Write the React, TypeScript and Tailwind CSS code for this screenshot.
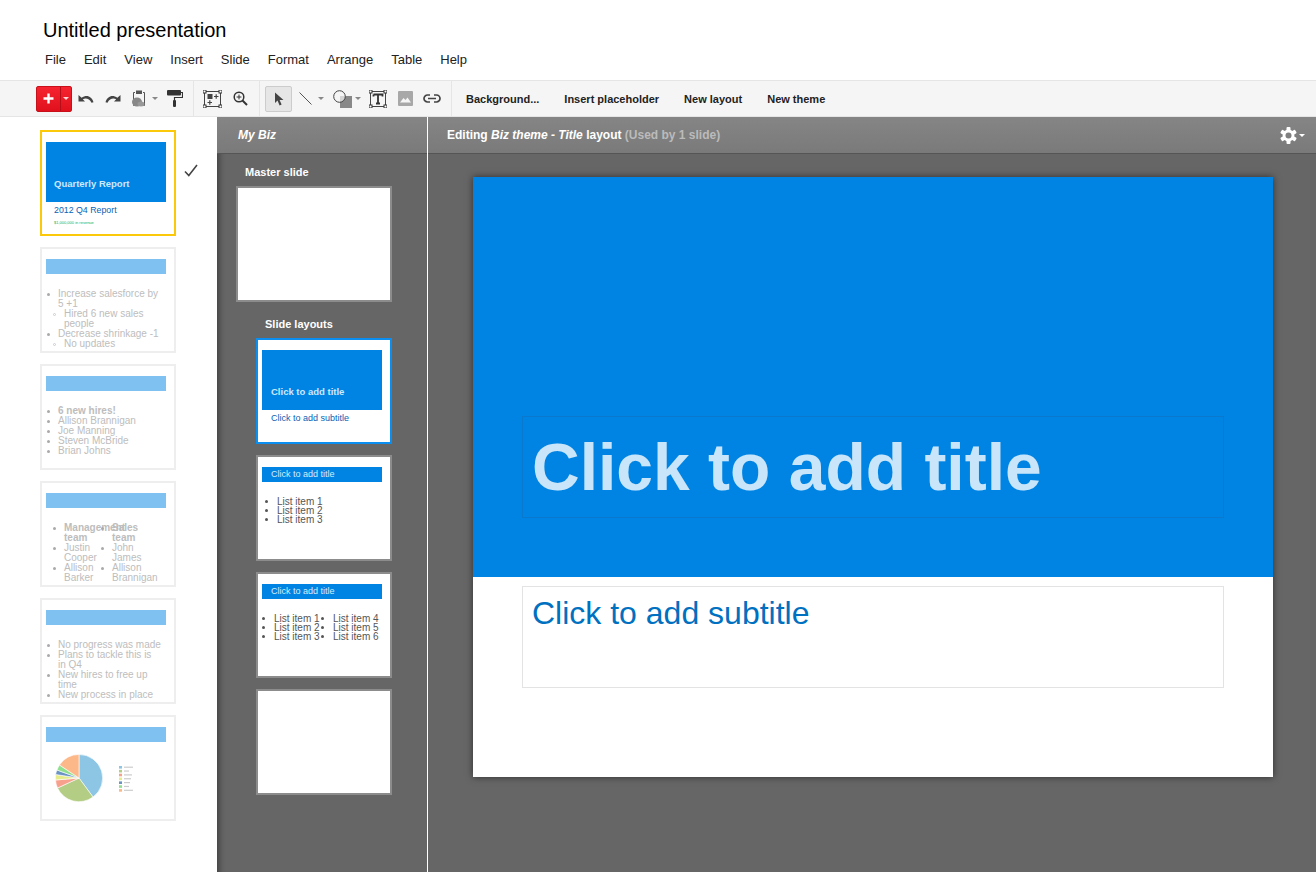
const menus = ["File", "Edit", "View", "Insert", "Slide", "Format", "Arrange", "Table", "Help"];
const toolButtons = ["Background...", "Insert placeholder", "New layout", "New theme"];

type Item = { text: string; level?: number; bold?: boolean };

const slide2: Item[] = [
  { text: "Increase salesforce by\n5 +1" },
  { text: "Hired 6 new sales\npeople", level: 1 },
  { text: "Decrease shrinkage -1" },
  { text: "No updates", level: 1 },
];
const slide3: Item[] = [
  { text: "6 new hires!", bold: true },
  { text: "Allison Brannigan" },
  { text: "Joe Manning" },
  { text: "Steven McBride" },
  { text: "Brian Johns" },
];
const slide5: Item[] = [
  { text: "No progress was made" },
  { text: "Plans to tackle this is\nin Q4" },
  { text: "New hires to free up\ntime" },
  { text: "New process in place" },
];

const Caret = ({ className = "" }: { className?: string }) => (
  <div className={`h-0 w-0 border-x-[3px] border-t-[3px] border-x-transparent border-t-[#888] ${className}`}></div>
);

const Handle = ({ x, y }: { x: number; y: number }) => (
  <rect x={x - 1.5} y={y - 1.5} width="3" height="3" fill="#fff" stroke="#333" />
);

const BulletList = ({ items }: { items: Item[] }) => (
  <div className="text-[10px] leading-[10px] text-[#bdbdbd]">
    {items.map((item, i) => (
      <div key={i} className={`flex ${item.level ? "ml-[6px]" : ""}`}>
        <span className={`mr-[8px] mt-[4px] h-[3px] w-[3px] shrink-0 rounded-full ${item.level ? "border border-[#ccc]" : "bg-[#aaa]"}`}></span>
        <span className={`whitespace-pre ${item.bold ? "font-bold" : ""}`}>{item.text}</span>
      </div>
    ))}
  </div>
);

const Thumb = ({ children, border = "border-[#eee]" }: { children?: React.ReactNode; border?: string }) => (
  <div className={`h-[106px] w-[136px] shrink-0 overflow-hidden border-2 bg-white px-[4px] pt-[10px] ${border}`}>{children}</div>
);

const TextThumb = ({ items }: { items: Item[] }) => (
  <Thumb>
    <div className="h-[15px] w-[120px] bg-[#7fc1f1]"></div>
    <div className="ml-[1px] mt-[15px]">
      <BulletList items={items} />
    </div>
  </Thumb>
);

const TwoColThumb = () => (
  <Thumb>
    <div className="h-[15px] w-[120px] bg-[#7fc1f1]"></div>
    <div className="ml-[7px] mt-[15px] flex">
      <div className="w-[48px]">
        <BulletList
          items={[
            { text: "Management\nteam", bold: true },
            { text: "Justin\nCooper" },
            { text: "Allison\nBarker" },
          ]}
        />
      </div>
      <div className="w-[48px]">
        <BulletList
          items={[
            { text: "Sales\nteam", bold: true },
            { text: "John\nJames" },
            { text: "Allison\nBrannigan" },
          ]}
        />
      </div>
    </div>
  </Thumb>
);

const ChartThumb = () => (
  <Thumb>
    <div className="h-[15px] w-[120px] bg-[#7fc1f1]"></div>
    <svg width="120" height="70" viewBox="0 0 120 70" className="block">
      <g transform="translate(33 36)" stroke="#fff" strokeWidth="0.6">
        <path d="M0 0 L0 -23.5 A23.5 23.5 0 0 1 14 19 Z" fill="#8cc6e4" />
        <path d="M0 0 L14 19 A23.5 23.5 0 0 1 -21.5 10 Z" fill="#b3cd85" />
        <path d="M0 0 L-21.5 10 A23.5 23.5 0 0 1 -23.5 2 Z" fill="#f7a08c" />
        <path d="M0 0 L-23.5 2 A23.5 23.5 0 0 1 -23.4 -3.5 Z" fill="#e6ec8c" />
        <path d="M0 0 L-23.4 -3.5 A23.5 23.5 0 0 1 -22 -8 Z" fill="#6b93c4" />
        <path d="M0 0 L-22 -8 A23.5 23.5 0 0 1 -19.5 -13 Z" fill="#8fe08f" />
        <path d="M0 0 L-19.5 -13 A23.5 23.5 0 0 1 0 -23.5 Z" fill="#fdb88a" />
      </g>
      {["#8cc6e4", "#b3cd85", "#f7a08c", "#e6ec8c", "#6b93c4", "#8fe08f", "#fdb88a"].map((c, i) => (
        <g key={c}>
          <rect x="73" y={24 + i * 3.85} width="3" height="2.6" fill={c} />
          <rect x="78" y={24.6 + i * 3.85} width={[9, 5, 8, 7, 6, 5, 9][i]} height="1.2" fill="#ccc" />
        </g>
      ))}
    </svg>
  </Thumb>
);

const LayoutTitle = () => (
  <div className="h-[15px] w-[120px] bg-[#0084e4] pl-[9px] text-[9px] leading-[15px] text-[#d6ecfb]">Click to add title</div>
);

const LayoutList = ({ items }: { items: string[] }) => (
  <div className="text-[10px] leading-[9px] text-[#555]">
    {items.map((t) => (
      <div key={t} className="flex">
        <span className="mt-[3px] h-[3px] w-[3px] shrink-0 rounded-full bg-[#555]"></span>
        <span className="ml-[9px] whitespace-nowrap">{t}</span>
      </div>
    ))}
  </div>
);

export default function App() {
  return (
    <div className="flex h-[872px] w-[1316px] flex-col overflow-hidden bg-white font-['Liberation_Sans',Arial,sans-serif] text-black">
      <div className="h-[80px] shrink-0 pl-[43px] pt-[17px]">
        <div className="text-[20px] leading-[26px]">Untitled presentation</div>
        <div className="ml-[2px] mt-[9px] flex gap-[18px] text-[13px] leading-[16px] text-[#222]">
          {menus.map((m) => (
            <span key={m}>{m}</span>
          ))}
        </div>
      </div>

      <div className="flex h-[37px] shrink-0 items-center border-y border-[#e5e5e5] bg-[#f5f5f5]">
        <div className="ml-[36px] flex h-[26px] w-[36px] overflow-hidden rounded-[2px] border border-[#c8101a] bg-gradient-to-b from-[#f5232f] to-[#e0101c] text-white">
          <div className="flex w-[24px] items-center justify-center border-r border-[#b50e18]">
            <svg width="11" height="11" viewBox="0 0 11 11">
              <path d="M5.5 0.5v10M0.5 5.5h10" stroke="#fff" strokeWidth="2.4" />
            </svg>
          </div>
          <div className="flex flex-1 items-center justify-center">
            <div className="h-0 w-0 border-x-[3px] border-t-[3px] border-x-transparent border-t-[#ffd5d5]"></div>
          </div>
        </div>

        <svg width="16" height="10" viewBox="0 0 16 10" className="ml-[6px]">
          <path d="M0.5 1 L0.5 7.5 L7 7.5 L4.8 5.2 C8 3.8 11.5 4.8 13.5 8.8 L15.5 8.2 C13.8 2.2 8.5 0 3.6 3.8 Z" fill="#444" />
        </svg>
        <svg width="16" height="10" viewBox="0 0 16 10" className="ml-[11px]">
          <path d="M15.5 1 L15.5 7.5 L9 7.5 L11.2 5.2 C8 3.8 4.5 4.8 2.5 8.8 L0.5 8.2 C2.2 2.2 7.5 0 12.4 3.8 Z" fill="#444" />
        </svg>

        <svg width="14" height="17" viewBox="0 0 14 17" className="ml-[11px]">
          <path d="M3 2.5H1.5v13h11v-13H11" fill="none" stroke="#555" strokeWidth="1" />
          <rect x="4" y="0.5" width="6" height="3.5" fill="#555" />
          <ellipse cx="5" cy="12" rx="5" ry="4.5" fill="#888" />
          <ellipse cx="9" cy="14" rx="3.5" ry="2.5" fill="#999" />
        </svg>
        <Caret className="ml-[6px]" />

        <svg width="16" height="17" viewBox="0 0 16 17" className="ml-[9px]">
          <rect x="0" y="0" width="14" height="5.5" rx="1" fill="#333" />
          <path d="M14 2.5h1.5v5H7.5v3" fill="none" stroke="#333" strokeWidth="1.2" />
          <rect x="6" y="10" width="3" height="7" rx="1" fill="#333" />
        </svg>

        <div className="ml-[10px] h-[36px] w-px bg-[#e5e5e5]"></div>

        <svg width="19" height="18" viewBox="0 0 19 18" className="ml-[9px]">
          <rect x="1.5" y="1.5" width="16" height="15" fill="none" stroke="#444" />
          <Handle x={1.5} y={1.5} />
          <Handle x={17.5} y={1.5} />
          <Handle x={1.5} y={16.5} />
          <Handle x={17.5} y={16.5} />
          <rect x="4.5" y="4" width="5" height="5" fill="#444" />
          <path d="M11 6.5h4.5M13.2 4.2v4.5M4.5 12.5h4.5M6.8 10.2v4.5" stroke="#444" strokeWidth="1.2" />
        </svg>
        <svg width="15" height="15" viewBox="0 0 15 15" className="ml-[11px]">
          <circle cx="6" cy="6" r="4.8" fill="none" stroke="#333" strokeWidth="1.5" />
          <path d="M9.5 9.5L14 14" stroke="#333" strokeWidth="2" />
          <path d="M6 3.6v4.8M3.6 6h4.8" stroke="#333" />
        </svg>

        <div className="ml-[11px] h-[36px] w-px bg-[#e5e5e5]"></div>

        <div className="ml-[5px] flex h-[26px] w-[27px] items-center justify-center rounded-[2px] border border-[#ccc] bg-[#e6e6e6]">
          <svg width="10" height="14" viewBox="0 0 10 14">
            <path d="M1 0.5V11L3.5 8.6 5.6 13.5 7.6 12.6 5.6 8H9.5Z" fill="#444" />
          </svg>
        </div>

        <svg width="13" height="13" viewBox="0 0 13 13" className="ml-[7px]">
          <path d="M0.5 0.5L12.5 12.5" stroke="#555" />
        </svg>
        <Caret className="ml-[6px]" />

        <svg width="19" height="18" viewBox="0 0 19 18" className="ml-[9px]">
          <rect x="7" y="6" width="12" height="12" fill="#888" />
          <circle cx="6.5" cy="6.5" r="5.8" fill="#f5f5f5" fillOpacity="0.7" stroke="#444" />
        </svg>
        <Caret className="ml-[3px]" />

        <svg width="18" height="18" viewBox="0 0 18 18" className="ml-[8px]">
          <rect x="1.5" y="1.5" width="15" height="15" fill="none" stroke="#444" />
          <Handle x={1.5} y={1.5} />
          <Handle x={16.5} y={1.5} />
          <Handle x={1.5} y={16.5} />
          <Handle x={16.5} y={16.5} />
          <path d="M4.5 4.5h9v2M9 4.5v9M7 13.5h4M4.5 4.5v2" fill="none" stroke="#333" strokeWidth="1.8" />
        </svg>

        <svg width="15" height="15" viewBox="0 0 15 15" className="ml-[11px]">
          <rect width="15" height="15" rx="1" fill="#a8a8a8" />
          <path d="M2 11.5L5.5 7 7.5 9 9.5 6.5 13 11.5Z" fill="#f5f5f5" />
        </svg>

        <svg width="18" height="9" viewBox="0 0 18 9" className="ml-[10px]">
          <path d="M7 1H4.5a3.5 3.5 0 0 0 0 7H7M11 1h2.5a3.5 3.5 0 0 1 0 7H11M5 4.5h8" fill="none" stroke="#444" strokeWidth="1.7" />
        </svg>

        <div className="ml-[10px] h-[36px] w-px bg-[#e5e5e5]"></div>

        <div className="ml-[14px] flex gap-[25px] text-[11px] font-bold leading-[14px] text-[#222]">
          {toolButtons.map((b) => (
            <span key={b}>{b}</span>
          ))}
        </div>
      </div>

      <div className="flex min-h-0 flex-1">
        <div className="flex w-[217px] shrink-0 items-start bg-white pl-[40px] pt-[13px]">
          <div className="flex flex-col gap-[11px]">
            <Thumb border="border-[#fcc80a]">
              <div className="h-[60px] w-[120px] bg-[#0084e4] pl-[8px] pt-[36px] text-[9.5px] font-bold leading-[12px] text-[#cfe8fb]">
                Quarterly Report
              </div>
              <div className="ml-[8px] mt-[3px] text-[8.8px] leading-[10px] text-[#0a5fb5]">2012 Q4 Report</div>
              <div className="ml-[8px] mt-[5px] text-[4px] leading-[5px] text-[#10b060]">$1,000,000 in revenue</div>
            </Thumb>
            <TextThumb items={slide2} />
            <TextThumb items={slide3} />
            <TwoColThumb />
            <TextThumb items={slide5} />
            <ChartThumb />
          </div>
          <svg width="14" height="13" viewBox="0 0 14 13" className="ml-[8px] mt-[34px]">
            <path d="M1 7.5L4.8 11.5 13 1" fill="none" stroke="#444" strokeWidth="1.6" />
          </svg>
        </div>

        <div className="w-[210px] shrink-0 bg-[#666] shadow-[inset_7px_0_6px_-5px_rgba(0,0,0,0.4)]">
          <div className="h-[37px] border-b border-[#555] bg-gradient-to-b from-[#858585] to-[#7a7a7a] pl-[21px] text-[12px] font-bold italic leading-[36px] text-white">
            My Biz
          </div>
          <div className="pl-[19px]">
            <div className="ml-[9px] mt-[11px] text-[11px] font-bold leading-[14px] text-white">Master slide</div>
            <div className="mt-[7px] h-[116px] w-[156px] border-2 border-[#8c8c8c] bg-white"></div>
            <div className="ml-[29px] mt-[15px] text-[11px] font-bold leading-[14px] text-white">Slide layouts</div>
            <div className="ml-[20px] mt-[7px] flex flex-col gap-[11px]">
              <Thumb border="border-[#0a8ff0]">
                <div className="h-[60px] w-[120px] bg-[#0084e4] pl-[9px] pt-[36px] text-[9.5px] font-bold leading-[12px] text-[#cfe8fb]">
                  Click to add title
                </div>
                <div className="ml-[9px] mt-[2px] text-[9px] leading-[12px] text-[#0a5fb5]">Click to add subtitle</div>
              </Thumb>
              <Thumb border="border-[#8c8c8c]">
                <LayoutTitle />
                <div className="ml-[3px] mt-[15px]">
                  <LayoutList items={["List item 1", "List item 2", "List item 3"]} />
                </div>
              </Thumb>
              <Thumb border="border-[#8c8c8c]">
                <LayoutTitle />
                <div className="mt-[15px] flex">
                  <div className="w-[59px]">
                    <LayoutList items={["List item 1", "List item 2", "List item 3"]} />
                  </div>
                  <div>
                    <LayoutList items={["List item 4", "List item 5", "List item 6"]} />
                  </div>
                </div>
              </Thumb>
              <Thumb border="border-[#8c8c8c]" />
            </div>
          </div>
        </div>

        <div className="min-w-0 flex-1 border-l border-white bg-[#666]">
          <div className="flex h-[37px] items-center justify-between border-b border-[#555] bg-gradient-to-b from-[#858585] to-[#7a7a7a] pl-[19px] pr-[11px] text-[12px] font-bold leading-[16px]">
            <div className="text-white">
              Editing <i>Biz theme - Title</i> layout <span className="text-[#bbb]">(Used by 1 slide)</span>
            </div>
            <div className="flex items-center gap-[2px]">
              <svg width="17" height="17" viewBox="0 0 17 17">
                <g fill="#fff">
                  <rect x="6.5" y="0" width="4" height="17" rx="1" />
                  <rect x="6.5" y="0" width="4" height="17" rx="1" transform="rotate(60 8.5 8.5)" />
                  <rect x="6.5" y="0" width="4" height="17" rx="1" transform="rotate(120 8.5 8.5)" />
                </g>
                <circle cx="8.5" cy="8.5" r="4.4" fill="none" stroke="#fff" strokeWidth="3" />
                <circle cx="8.5" cy="8.5" r="3" fill="#7f7f7f" />
              </svg>
              <div className="h-0 w-0 border-x-[3px] border-t-[3px] border-x-transparent border-t-white"></div>
            </div>
          </div>

          <div className="ml-[45px] mt-[23px] h-[600px] w-[800px] bg-white shadow-[0_0_7px_rgba(0,0,0,0.55)]">
            <div className="h-[400px] bg-[#0084e4] pl-[49px] pt-[239px]">
              <div className="flex h-[102px] w-[702px] items-center border border-[#0a78cc] pl-[9px] text-[66px] font-bold leading-[80px] text-[#c8e5fa]">
                Click to add title
              </div>
            </div>
            <div className="pl-[49px] pt-[9px]">
              <div className="h-[102px] w-[702px] border border-[#e3e3e3] pl-[9px] pt-[7px] text-[32px] leading-[38px] text-[#0070c0]">
                Click to add subtitle
              </div>
            </div>
          </div>
        </div>
      </div>
    </div>
  );
}
